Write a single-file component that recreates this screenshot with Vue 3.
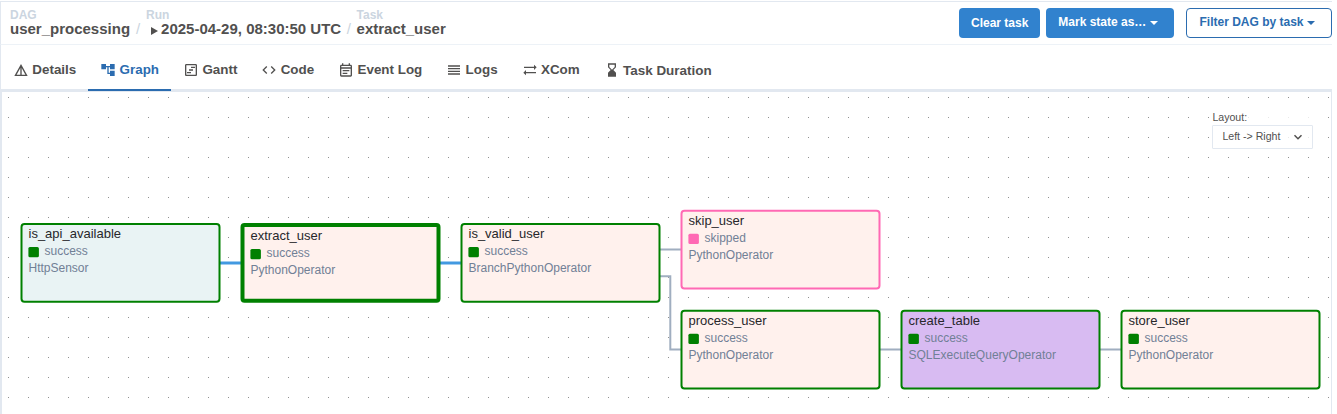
<script setup>
const tabs = [
  { name: 'Details', icon: 'M12 3 2 21h20L12 3zm1 5.92L18.6 19H13V8.92zm-2 0V19H5.4L11 8.92z' },
  { name: 'Graph', active: true, icon: 'M22 11V3h-7v3H9V3H2v8h7V8h2v10h4v3h7v-8h-7v3h-2V8h2v3z' },
  { name: 'Gantt', icon: 'M19 3H5c-1.1 0-2 .9-2 2v14c0 1.1.9 2 2 2h14c1.1 0 2-.9 2-2V5c0-1.1-.9-2-2-2zm0 16H5V5h14v14zM6 15h6v2H6zm6-8h6v2h-6zM9 11h6v2H9z' },
  { name: 'Code', icon: 'M9.4 16.6 4.8 12l4.6-4.6L8 6l-6 6 6 6 1.4-1.4zm5.2 0 4.6-4.6-4.6-4.6L16 6l6 6-6 6-1.4-1.4z' },
  { name: 'Event Log', icon: 'M19 4h-1V2h-2v2H8V2H6v2H5c-1.11 0-1.99.9-1.99 2L3 20a2 2 0 0 0 2 2h14c1.1 0 2-.9 2-2V6c0-1.1-.9-2-2-2zm0 16H5V10h14v10zm0-12H5V6h14v2zM7 12h10v2H7zm0 4h7v2H7z' },
  { name: 'Logs', icon: 'M3 15h18v-2H3v2zm0 4h18v-2H3v2zm0-8h18V9H3v2zm0-6v2h18V5H3z' },
  { name: 'XCom', icon: 'm22 8-4-4v3H3v2h15v3l4-4zM2 16l4 4v-3h15v-2H6v-3l-4 4z' },
  { name: 'Task Duration', low: true, icon: 'm18 22-.01-6L14 12l3.99-4.01L18 2H6v6l4 4-4 3.99V22h12zM8 7.5V4h8v3.5l-4 4-4-4z' }
]

// Positions are relative to the graph canvas.
const nodes = [
  { id: 'is_api_available', state: 'success', op: 'HttpSensor', x: 18.5, y: 131, bg: '#e9f3f4' },
  { id: 'extract_user', state: 'success', op: 'PythonOperator', x: 238.5, y: 131, bg: '#fff1ed', selected: true },
  { id: 'is_valid_user', state: 'success', op: 'BranchPythonOperator', x: 458.5, y: 131, bg: '#fff1ed' },
  { id: 'skip_user', state: 'skipped', op: 'PythonOperator', x: 678.5, y: 117.7, bg: '#fff1ed' },
  { id: 'process_user', state: 'success', op: 'PythonOperator', x: 678.5, y: 217.7, bg: '#fff1ed' },
  { id: 'create_table', state: 'success', op: 'SQLExecuteQueryOperator', x: 898.5, y: 217.7, bg: '#d8bbf2' },
  { id: 'store_user', state: 'success', op: 'PythonOperator', x: 1118.5, y: 217.7, bg: '#fff1ed' }
]
const stateColors = { success: 'green', skipped: 'hotpink' }
const stroke = (n) => (n.selected ? 4 : 2)
</script>

<template>
  <div class="page">
    <header class="top">
      <div class="crumbs">
        <div class="crumb"><small>DAG</small><b>user_processing</b></div>
        <span class="slash">/</span>
        <div class="crumb run">
          <small>Run</small>
          <b><svg class="play" viewBox="0 0 7 8"><path d="M0 0 7 4 0 8z" /></svg>2025-04-29, 08:30:50 UTC</b>
        </div>
        <span class="slash second">/</span>
        <div class="crumb"><small>Task</small><b>extract_user</b></div>
      </div>
      <div class="actions">
        <button class="btn clear">Clear task</button>
        <button class="btn mark">Mark state as…<svg class="caret" viewBox="0 0 8 4"><path d="M0 0h8L4 4z" /></svg></button>
        <button class="btn filter">Filter DAG by task<svg class="caret" viewBox="0 0 8 4"><path d="M0 0h8L4 4z" /></svg></button>
      </div>
    </header>

    <nav class="tabs">
      <div v-for="t in tabs" :key="t.name" class="tab" :class="{ active: t.active, low: t.low }">
        <svg viewBox="0 0 24 24"><path :d="t.icon" /></svg>
        <span>{{ t.name }}</span>
      </div>
    </nav>

    <main class="canvas">
      <svg class="layer" width="1329" height="322">
        <defs>
          <pattern id="dots" width="20" height="20" patternUnits="userSpaceOnUse">
            <rect x="6" y="5" width="1" height="1" fill="#919191" />
          </pattern>
        </defs>
        <rect width="1329" height="322" fill="url(#dots)" />
        <g fill="none" stroke="#a0aec0" stroke-width="2">
          <path d="M657 157.5h22M657 184.3h11.3v73.2H679M878 257.5h21M1098 257.5h21" />
          <path d="M217 170.9h22M437 170.9h22" stroke="#4299e1" stroke-width="3" />
        </g>
        <g v-for="n in nodes" :key="n.id">
          <rect
            :x="n.x + stroke(n) / 2"
            :y="n.y + stroke(n) / 2"
            :width="200 - stroke(n)"
            :height="79.8 - stroke(n)"
            :rx="4 - stroke(n) / 2"
            :fill="n.bg"
            :stroke="stateColors[n.state]"
            :stroke-width="stroke(n)"
          />
          <rect
            :x="n.x + 5.9 + stroke(n)"
            :y="n.y + 22 + stroke(n)"
            width="10.5"
            height="10.2"
            rx="1.5"
            :fill="stateColors[n.state]"
          />
        </g>
      </svg>
      <div
        v-for="n in nodes"
        :key="n.id"
        class="node"
        :class="{ selected: n.selected }"
        :style="{ left: n.x + 'px', top: Math.ceil(n.y) + 'px' }"
      >
        <div class="title">{{ n.id }}</div>
        <div class="state">{{ n.state }}</div>
        <div class="op">{{ n.op }}</div>
      </div>
      <div class="layout">
        <label>Layout:</label>
        <div class="select">
          <span>Left -&gt; Right</span>
          <svg viewBox="0 0 10 8"><path d="M1.5 2.2 5 5.7 8.5 2.2" /></svg>
        </div>
      </div>
    </main>
  </div>
</template>

<style>
body { background: #fff; overflow: hidden; }
</style>

<style scoped>
* { box-sizing: border-box; }
.page {
  width: 1332px;
  height: 414px;
  padding-top: 1px;
  font-family: "Liberation Sans", Arial, sans-serif;
  color: #51504f;
  display: flex;
  flex-direction: column;
}
.top {
  height: 44px;
  flex: none;
  border-top: 1px solid #e2e8f0;
  border-bottom: 1px solid #edf2f7;
  border-left: 1px solid #e2e8f0;
  display: flex;
  justify-content: space-between;
}
.crumbs { display: flex; padding: 7px 0 0 9px; }
.crumb { display: flex; flex-direction: column; white-space: nowrap; }
.crumb small { font-size: 12px; line-height: 13px; font-weight: bold; color: #cbd5e0; }
.crumb b { font-size: 15px; line-height: 16px; margin-top: -1px; }
.slash { width: 16px; padding-top: 12px; text-align: center; font-size: 15px; line-height: 16px; color: #cbd5e0; }
.second { width: 15.4px; }
.play { width: 7px; height: 8px; margin: 0 3px 0 5px; fill: #51504f; vertical-align: -1px; }
.actions { display: flex; padding-top: 6px; }
.btn {
  height: 30px;
  border: 0;
  border-radius: 4px;
  background: #3182ce;
  color: #fff;
  font: bold 12px/14px "Liberation Sans", Arial, sans-serif;
  display: flex;
  align-items: center;
  padding: 0 0 2px 12px;
  white-space: nowrap;
}
.clear { width: 81px; padding-bottom: 0; margin-right: 6px; }
.mark { width: 128px; margin-right: 12px; padding-left: 12.3px; }
.filter { width: 146px; background: #fff; color: #2b6cb0; border: 1px solid #2b6cb0; padding-left: 12.5px; }
.caret { width: 8px; height: 4px; margin: 2.5px 0 0 4px; fill: currentColor; }
.filter .caret { margin-left: 3.5px; }
.tabs {
  height: 47px;
  flex: none;
  display: flex;
  border-left: 1px solid #e2e8f0;
  border-bottom: 3px solid #e2e8f0;
}
.tab {
  height: 46px;
  display: flex;
  align-items: center;
  padding: 5px 12px 0 12px;
  font-size: 13.4px;
  font-weight: bold;
  border-bottom: 2px solid transparent;
  white-space: nowrap;
}
.tab svg { width: 16px; height: 16px; margin-right: 3.35px; fill: currentColor; }
.tab.active { color: #2b6cb0; border-color: #2b6cb0; }
.tab.low { padding-top: 7px; font-size: 13.45px; }
.tab.low svg { margin: -2px 2.9px 0 0.5px; }
.canvas {
  position: relative;
  flex: 1;
  border-left: 2px solid #e2e8f0;
  border-right: 1px solid #e2e8f0;
  overflow: hidden;
}
.layer { display: block; }
.node {
  position: absolute;
  width: 200px;
  height: 80px;
  padding: 2px 0 0 8px;
  font-size: 12px;
  line-height: 17px;
  white-space: nowrap;
  color: #718096;
}
.node.selected { padding: 4px 0 0 10px; }
.title { font-size: 13px; color: #27272b; }
.state { padding-left: 16px; margin-top: 1px; }
.layout {
  position: absolute;
  left: 1210px;
  top: 18px;
  width: 101px;
  font-size: 10.6px;
}
.layout label { display: block; height: 15px; line-height: 14px; padding-left: 0.4px; background: rgba(255, 255, 255, 0.8); }
.select {
  height: 24px;
  border: 1px solid #e2e8f0;
  border-radius: 1px;
  background: rgba(255, 255, 255, 0.8);
  display: flex;
  align-items: center;
  justify-content: space-between;
  padding: 0 9px 2px 9.4px;
}
.select svg { width: 10px; height: 8px; margin-top: 1px; fill: none; stroke: #51504f; stroke-width: 1.5; }
</style>
